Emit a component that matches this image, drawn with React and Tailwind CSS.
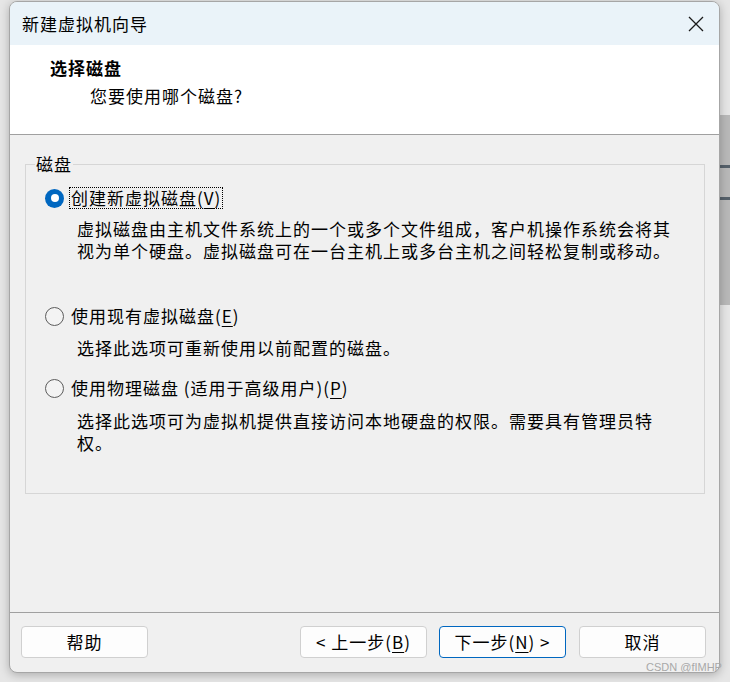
import React from "react";

const font = { fontFamily: '"Noto Sans CJK SC", "Noto Sans", sans-serif' };

function Radio({ checked }) {
  if (checked) {
    return (
      <span className="flex h-[19px] w-[19px] shrink-0 items-center justify-center rounded-full bg-[#0067c0]">
        <span className="h-[8px] w-[8px] rounded-full bg-white" />
      </span>
    );
  }
  return <span className="h-[19px] w-[19px] shrink-0 rounded-full border border-[#5c5c5c] bg-[#f3f3f3]" />;
}

function U({ children }) {
  return <span className="underline underline-offset-[3px] decoration-1">{children}</span>;
}

function Btn({ children, primary, className = "" }) {
  return (
    <div
      className={
        "flex h-[32px] w-[127px] items-center justify-center rounded-[4px] border bg-[#fdfdfd] text-[17px] tracking-[1px] text-black " +
        (primary ? "border-[#0067c0] " : "border-[#d0d0d0] ") +
        className
      }
    >
      {children}
    </div>
  );
}

export default function App() {
  return (
    <div className="relative h-[682px] w-[730px] overflow-hidden bg-[#e6e6e6]" style={font}>
      {/* background window slice on the right */}
      <div className="absolute left-[720px] top-[115px] flex h-[190px] w-[10px] flex-col bg-[#b9b9b9]">
        <div className="mt-[50px] h-[3px] w-full bg-[#56616b]" />
        <div className="mt-[29px] h-[3px] w-full bg-[#56616b]" />
      </div>

      <div className="absolute left-[9px] top-[1px] flex h-[672px] w-[711px] flex-col overflow-hidden rounded-[8px] border border-[#a6a6a6] bg-[#f0f0f0] shadow-[0_2px_10px_rgba(0,0,0,0.25)]">
        {/* title bar */}
        <div className="flex h-[43px] shrink-0 items-center justify-between bg-[#eaf3f9] pl-[12px] pr-[13px]">
          <span className="text-[17px] tracking-[1px] text-black">新建虚拟机向导</span>
          <svg width="16" height="16" viewBox="0 0 16 16" className="mr-[2px]">
            <path d="M1 1L15 15M15 1L1 15" stroke="#1a1a1a" strokeWidth="1.3" />
          </svg>
        </div>

        {/* header */}
        <div className="flex h-[90px] shrink-0 flex-col border-b border-[#a0a0a0] bg-white">
          <div className="ml-[40px] mt-[11px] h-[24px] text-[17px] font-bold leading-[24px] tracking-[1px] text-black">
            选择磁盘
          </div>
          <div className="ml-[80px] mt-[4px] h-[24px] text-[17px] leading-[24px] tracking-[1px] text-black">
            您要使用哪个磁盘?
          </div>
        </div>

        {/* body */}
        <div className="flex flex-1 flex-col pl-[15px] pr-[14px] pt-[29px]">
          <div className="relative h-[330px] border border-[#d6d6d6] text-[17px] leading-[22px] tracking-[1px] text-black">
            <span className="absolute left-[9px] top-[-12px] bg-[#f0f0f0] px-[1px] leading-[22px]">磁盘</span>
            <div className="flex flex-col pl-[19px] pt-[22px]">
              <div className="flex h-[22px] items-center">
                <Radio checked />
                <span className="ml-[5px] border border-dotted border-black px-[1px] leading-[20px]">
                  创建新虚拟磁盘(<U>V</U>)
                </span>
              </div>
              <div className="ml-[32px] mt-[9px]">
                <div>虚拟磁盘由主机文件系统上的一个或多个文件组成，客户机操作系统会将其</div>
                <div>视为单个硬盘。虚拟磁盘可在一台主机上或多台主机之间轻松复制或移动。</div>
              </div>

              <div className="mt-[43px] flex h-[22px] items-center">
                <Radio />
                <span className="ml-[7px]">
                  使用现有虚拟磁盘(<U>E</U>)
                </span>
              </div>
              <div className="ml-[32px] mt-[10px]">选择此选项可重新使用以前配置的磁盘。</div>

              <div className="mt-[18px] flex h-[22px] items-center">
                <Radio />
                <span className="ml-[7px]">
                  使用物理磁盘 (适用于高级用户)(<U>P</U>)
                </span>
              </div>
              <div className="ml-[32px] mt-[11px]">
                <div>选择此选项可为虚拟机提供直接访问本地硬盘的权限。需要具有管理员特</div>
                <div>权。</div>
              </div>
            </div>
          </div>
        </div>

        {/* footer */}
        <div className="flex h-[60px] shrink-0 items-start border-t border-[#a0a0a0] pl-[11px] pr-[13px] pt-[13px]">
          <Btn>帮助</Btn>
          <div className="flex-1" />
          <Btn>
            &lt; 上一步(<U>B</U>)
          </Btn>
          <Btn primary className="ml-[12px]">
            下一步(<U>N</U>) &gt;
          </Btn>
          <Btn className="ml-[13px]">取消</Btn>
        </div>
      </div>

      <div
        className="absolute left-[646px] top-[660px] text-[11px] leading-[14px] text-[#a8a8a8]"
        style={{ fontFamily: '"Liberation Sans", sans-serif' }}
      >
        CSDN @fIMHP
      </div>
    </div>
  );
}
